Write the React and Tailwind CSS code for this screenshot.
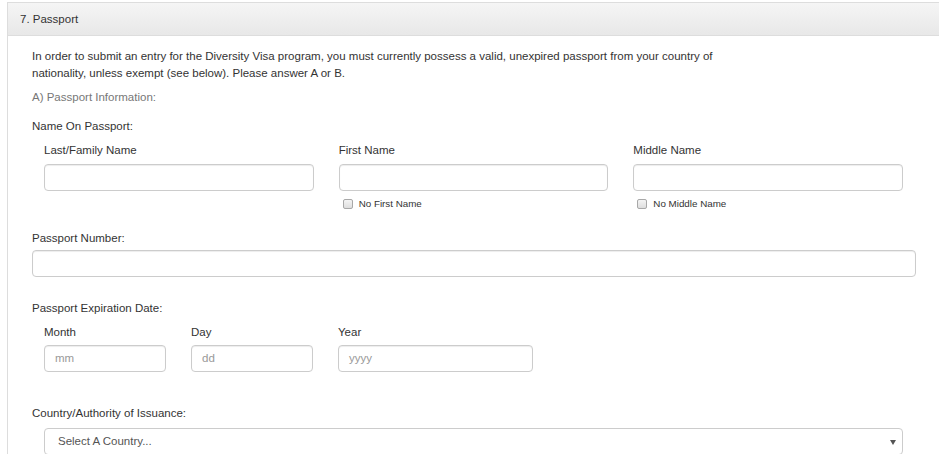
import React from "react";

const font = { fontFamily: '"Liberation Sans", Arial, sans-serif' };

function Input({ className = "", placeholder = "" }) {
  return (
    <div
      className={
        "h-[27px] rounded-[4px] border border-[#cccccc] bg-white shadow-[inset_0_1px_1px_rgba(0,0,0,0.075)] flex items-center text-[11.5px] text-[#999999] " +
        className
      }
    >
      {placeholder}
    </div>
  );
}

function Check({ label }) {
  return (
    <div className="mt-[4px] flex items-center h-[17px] pl-[4px]">
      <span className="w-[10px] h-[10px] rounded-[2px] border border-[#a8a8a8] bg-gradient-to-b from-[#f4f4f4] to-[#dedede]" />
      <span className="ml-[6px] text-[9.8px] text-[#333333]">{label}</span>
    </div>
  );
}

export default function App() {
  return (
    <div className="w-[939px] h-[454px] overflow-hidden bg-white pl-[7px] pt-[2px]" style={font}>
      <div className="w-[960px] border-l border-t border-[#dddddd] text-[11.5px] leading-[17px] text-[#333333]">
        <div className="h-[33px] border-b border-[#dddddd] bg-gradient-to-b from-[#f5f5f5] to-[#e8e8e8] pl-[12px] flex items-center">
          7. Passport
        </div>
        <div className="pl-[24px] pt-[12px]">
          <p className="w-[700px]">
            In order to submit an entry for the Diversity Visa program, you must currently possess a valid, unexpired passport from your country of nationality, unless exempt (see below). Please answer A or B.
          </p>
          <div className="mt-[7px] text-[#777777]">A) Passport Information:</div>
          <div className="mt-[12px]">Name On Passport:</div>
          <div className="ml-[12px] mt-[7px] w-[859px] grid grid-cols-3 gap-x-[25px]">
            <div>
              <div>Last/Family Name</div>
              <Input className="mt-[5px]" />
            </div>
            <div>
              <div>First Name</div>
              <Input className="mt-[5px]" />
              <Check label="No First Name" />
            </div>
            <div>
              <div>Middle Name</div>
              <Input className="mt-[5px]" />
              <Check label="No Middle Name" />
            </div>
          </div>
          <div className="mt-[18px]">Passport Number:</div>
          <Input className="mt-[3px] w-[884px]" />
          <div className="mt-[23px]">Passport Expiration Date:</div>
          <div className="ml-[12px] mt-[7px] flex gap-x-[25px]">
            <div className="w-[122px]">
              <div>Month</div>
              <Input className="mt-[4px] pl-[10px]" placeholder="mm" />
            </div>
            <div className="w-[122px]">
              <div>Day</div>
              <Input className="mt-[4px] pl-[10px]" placeholder="dd" />
            </div>
            <div className="w-[195px]">
              <div>Year</div>
              <Input className="mt-[4px] pl-[10px]" placeholder="yyyy" />
            </div>
          </div>
          <div className="mt-[33px]">Country/Authority of Issuance:</div>
          <div className="ml-[12px] mt-[6px] w-[859px] h-[27px] rounded-[4px] border border-[#cccccc] bg-white flex items-center justify-between pl-[13px] pr-[6px] text-[#555555]">
            <span>Select A Country...</span>
            <svg width="6" height="5" viewBox="0 0 6 5" className="mt-[1px]">
              <polygon points="0,0 6,0 3,5" fill="#555555" />
            </svg>
          </div>
        </div>
      </div>
    </div>
  );
}
